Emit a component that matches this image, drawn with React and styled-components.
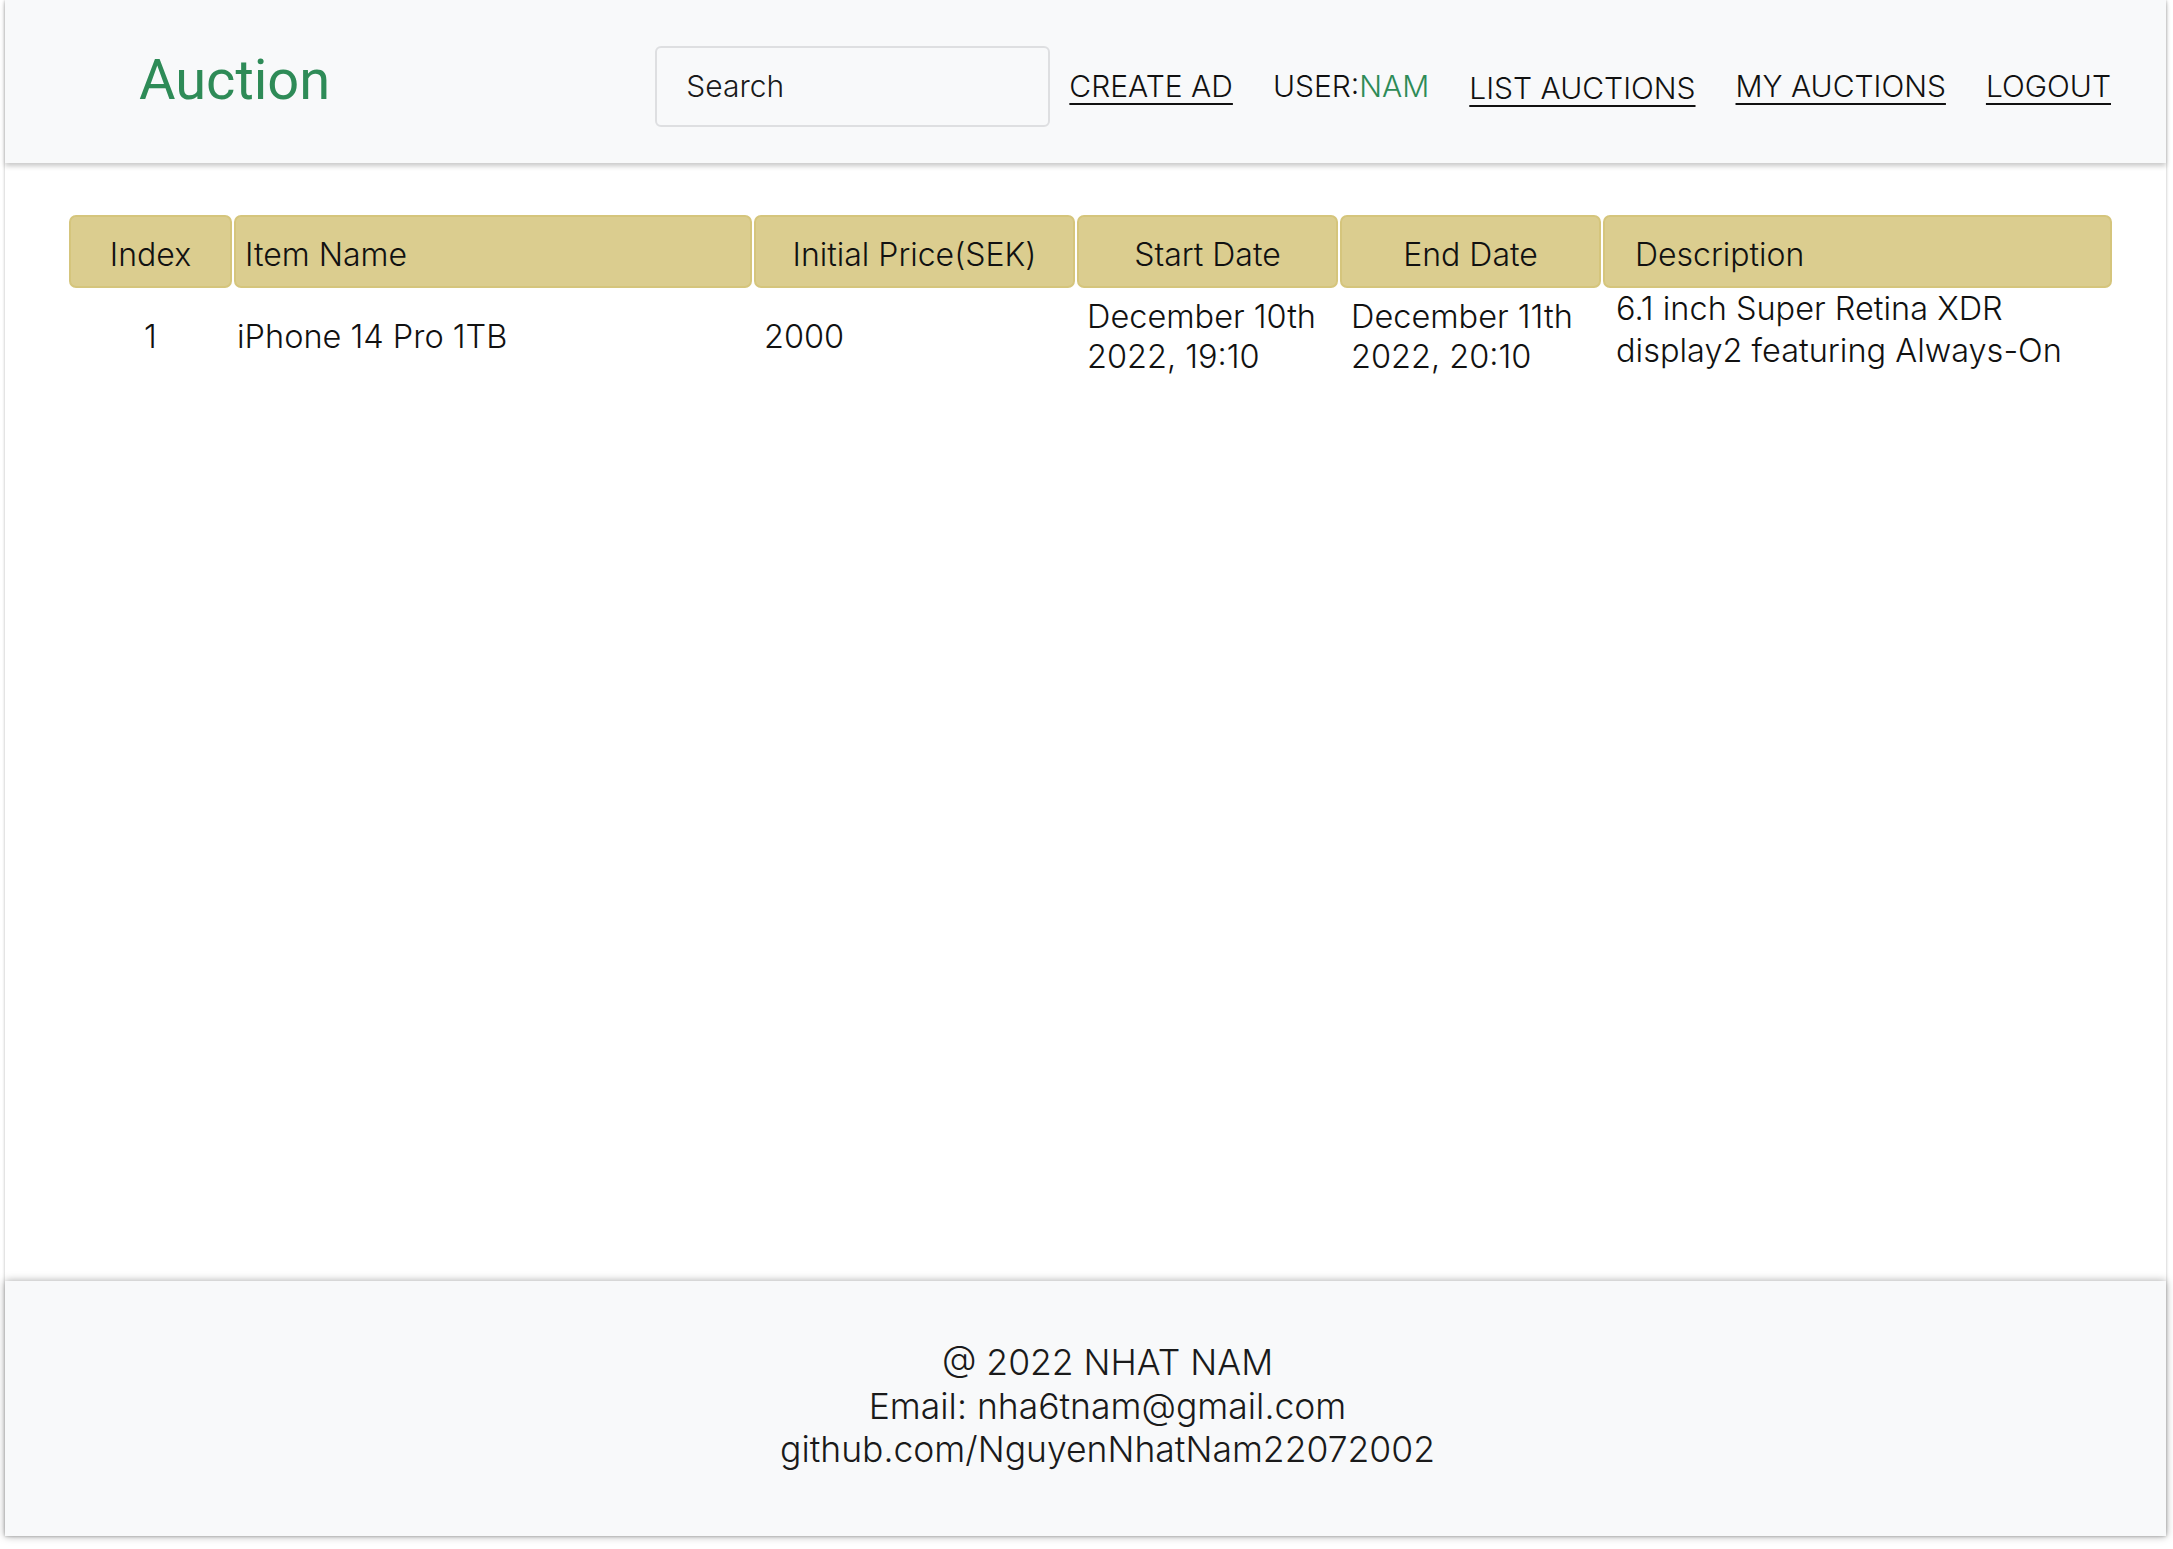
import React from "react";
import styled, { createGlobalStyle } from "styled-components";

const GlobalStyle = createGlobalStyle`
  html, body {
    margin: 0;
    padding: 0;
    background: #fff;
  }
  body {
    font-family: "Inter", "Liberation Sans", sans-serif;
    font-weight: 300;
    color: #1a1a1a;
  }
  * {
    box-sizing: border-box;
  }
`;

const Page = styled.div`
  margin: 0 7px 13px 5px;
  box-shadow: 0 0 3px rgba(0, 0, 0, 0.28);
  background: #fff;
`;

const HeaderBar = styled.header`
  display: flex;
  align-items: center;
  height: 163px;
  padding: 9px 55px 0 134px;
  background: #f8f9fa;
  box-shadow: 0 3px 5px rgba(0, 0, 0, 0.22);
  position: relative;
  z-index: 1;
`;

const Logo = styled.div`
  font-family: "Roboto", "Inter", sans-serif;
  font-weight: 400;
  font-size: 56px;
  color: #2e8b57;
  margin-top: -12px;
`;

const NavGroup = styled.nav`
  display: flex;
  align-items: center;
  margin-left: auto;
`;

const SearchInput = styled.input`
  width: 395px;
  height: 81px;
  padding: 0 0 0 29px;
  margin-right: 19px;
  border: 2px solid #dedfe1;
  border-radius: 6px;
  background: #f8f9fa;
  font-family: "Inter", sans-serif;
  font-weight: 300;
  font-size: 30px;
  color: #1a1a1a;
  outline: none;

  &::placeholder {
    color: #1a1a1a;
  }
`;

const NavLink = styled.a`
  font-size: 30px;
  color: #111;
  text-decoration: underline;
  text-decoration-thickness: 2px;
  text-underline-offset: 6px;
  margin-left: ${({ first }) => (first ? "0" : "40px")};
  margin-top: ${({ low }) => (low ? "4px" : "0")};
`;

const UserLabel = styled.span`
  font-size: 30px;
  color: #111;
  margin-left: 40px;

  span {
    color: #2e8b57;
  }
`;

const Main = styled.main`
  min-height: 1118px;
  padding: 52px 55px 0 64px;
`;

const Row = styled.div`
  display: grid;
  grid-template-columns: 163px 518px 321px 261px 261px 509px;
  column-gap: 2px;
`;

const HeadCell = styled.div`
  height: 73px;
  display: flex;
  align-items: center;
  justify-content: ${({ align }) => (align === "left" ? "flex-start" : "center")};
  padding: 5px ${({ pad }) => pad || 0}px 0;
  background: #dbcd8f;
  border: 2px solid #d5c57c;
  border-radius: 7px;
  font-size: 32px;
  color: #111;
`;

const BodyRow = styled(Row)`
  min-height: 95px;
  padding-top: 3px;
  align-items: center;
`;

const Cell = styled.div`
  font-size: 32.5px;
  line-height: 40px;
  color: #111;
  padding-left: ${({ pad }) => pad || 0}px;
  text-align: ${({ align }) => align || "left"};
  align-self: ${({ top }) => (top ? "start" : "center")};
  ${({ top }) => top && "line-height: 42px; margin-top: -3px;"}
`;

const Footer = styled.footer`
  height: 255px;
  display: flex;
  flex-direction: column;
  align-items: center;
  justify-content: center;
  padding: 0 0 4px 44px;
  background: #f8f9fa;
  box-shadow: 0 0 8px rgba(0, 0, 0, 0.35);
  position: relative;
  font-size: 35.5px;
  line-height: 43.5px;
  color: #1a1a1a;
`;

const columns = [
  { title: "Index", align: "center" },
  { title: "Item Name", align: "left", pad: 9 },
  { title: "Initial Price(SEK)", align: "center" },
  { title: "Start Date", align: "center" },
  { title: "End Date", align: "center" },
  { title: "Description", align: "left", pad: 30 },
];

const auctions = [
  {
    index: 1,
    name: "iPhone 14 Pro 1TB",
    price: 2000,
    start: "December 10th 2022, 19:10",
    end: "December 11th 2022, 20:10",
    description: "6.1 inch Super Retina XDR display2 featuring Always-On",
  },
];

export default function App() {
  return (
    <>
      <GlobalStyle />
      <Page>
        <HeaderBar>
          <Logo>Auction</Logo>
          <NavGroup>
            <SearchInput placeholder="Search" />
            <NavLink href="#create" first>
              CREATE AD
            </NavLink>
            <UserLabel>
              USER:<span>NAM</span>
            </UserLabel>
            <NavLink href="#list" low>
              LIST AUCTIONS
            </NavLink>
            <NavLink href="#mine">MY AUCTIONS</NavLink>
            <NavLink href="#logout">LOGOUT</NavLink>
          </NavGroup>
        </HeaderBar>

        <Main>
          <Row>
            {columns.map((c) => (
              <HeadCell key={c.title} align={c.align} pad={c.pad}>
                {c.title}
              </HeadCell>
            ))}
          </Row>
          {auctions.map((a) => (
            <BodyRow key={a.index}>
              <Cell align="center">{a.index}</Cell>
              <Cell pad={3}>{a.name}</Cell>
              <Cell pad={10}>{a.price}</Cell>
              <Cell pad={10}>{a.start}</Cell>
              <Cell pad={11}>{a.end}</Cell>
              <Cell pad={13} top>
                {a.description}
              </Cell>
            </BodyRow>
          ))}
        </Main>

        <Footer>
          <div>@ 2022 NHAT NAM</div>
          <div>Email: nha6tnam@gmail.com</div>
          <div>github.com/NguyenNhatNam22072002</div>
        </Footer>
      </Page>
    </>
  );
}
